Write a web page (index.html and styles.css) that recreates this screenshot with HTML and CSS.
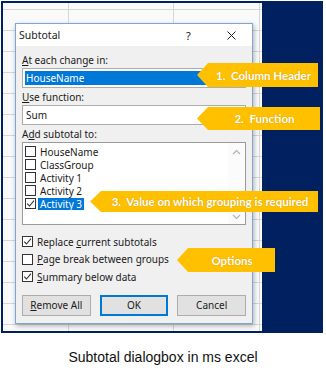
FILE: index.html
```html
<!DOCTYPE html>
<html lang="en">
<head>
    <meta charset="UTF-8">
    <meta name="viewport" content="width=device-width, initial-scale=1.0">
    <title>Subtotal dialogbox in ms excel</title>
    <link rel="stylesheet" href="styles.css">
</head>
<body>
    <div class="shot">
        <!-- Spreadsheet behind the dialog -->
        <div class="sheet">
            <div class="dialog">
                <div class="titlebar">
                    <span class="title">Subtotal</span>
                    <span class="help">?</span>
                    <svg class="close" width="9" height="9" viewBox="0 0 9 9">
                        <path d="M0.5 0.5 L8.5 8.5 M8.5 0.5 L0.5 8.5" stroke="#222" stroke-width="1" fill="none"/>
                    </svg>
                </div>
                <div class="dialog-body">
                    <div class="label"><u>A</u>t each change in:</div>
                    <div class="combo"><span class="selected">HouseName</span></div>
                    <div class="label"><u>U</u>se function:</div>
                    <div class="combo"><span class="value">Sum</span></div>
                    <div class="label">A<u>d</u>d subtotal to:</div>
                    <div class="listbox">
                        <div class="items">
                            <div class="item"><span class="check"></span><span class="name">HouseName</span></div>
                            <div class="item"><span class="check"></span><span class="name">ClassGroup</span></div>
                            <div class="item"><span class="check"></span><span class="name">Activity 1</span></div>
                            <div class="item"><span class="check"></span><span class="name">Activity 2</span></div>
                            <div class="item"><span class="check checked"></span><span class="name sel">Activity 3</span></div>
                        </div>
                        <div class="scrollbar">
                            <svg width="9" height="6" viewBox="0 0 9 6"><path d="M1 5 L4.5 1.5 L8 5" stroke="#b4b4b4" stroke-width="1.2" fill="none"/></svg>
                            <svg width="9" height="6" viewBox="0 0 9 6"><path d="M1 1 L4.5 4.5 L8 1" stroke="#b4b4b4" stroke-width="1.2" fill="none"/></svg>
                        </div>
                    </div>
                    <div class="options">
                        <div class="option"><span class="check checked"></span><span>Replace <u>c</u>urrent subtotals</span></div>
                        <div class="option"><span class="check"></span><span><u>P</u>age break between groups</span></div>
                        <div class="option"><span class="check checked"></span><span><u>S</u>ummary below data</span></div>
                    </div>
                    <div class="buttons">
                        <button><u>R</u>emove All</button>
                        <button class="default">OK</button>
                        <button>Cancel</button>
                    </div>
                </div>
            </div>
        </div>
        <div class="navy"></div>

        <!-- Yellow callouts -->
        <div class="callout c1">1.&nbsp; Column Header</div>
        <div class="callout c2">2.&nbsp; Function</div>
        <div class="callout c3">3.&nbsp; Value on which grouping is required</div>
        <div class="callout c4">Options</div>
    </div>

    <p class="caption">Subtotal dialogbox in ms excel</p>
</body>
</html>
```

FILE: styles.css
```css
body {
    margin: 0;
    background-color: #ffffff;
    font-family: "Noto Sans", "Open Sans", sans-serif;
    color: #1a1a1a;
}
.shot {
    position: relative;
    display: flex;
    width: 318px;
    height: 328px;
    margin: 1px 0 0 1px;
    border: 2px solid #002060;
}
.sheet {
    width: 259px;
    padding: 20px 0 0 12px;
    box-sizing: border-box;
    background-color: #fafafa;
    background-image:
        linear-gradient(to right, transparent 65px, #d6d6d6 65px, #d6d6d6 66px, transparent 66px),
        linear-gradient(to right, transparent 170px, #d6d6d6 170px, #d6d6d6 171px, transparent 171px),
        linear-gradient(to right, transparent 256px, #d6d6d6 256px, #d6d6d6 257px, transparent 257px),
        repeating-linear-gradient(to bottom, transparent 0, transparent 6px, #d6d6d6 6px, #d6d6d6 7px, transparent 7px, transparent 21px);
}
.navy {
    flex: 1;
    background-color: #002060;
}
.dialog {
    width: 238px;
    height: 301px;
    box-sizing: border-box;
    border: 1px solid #7ba6d6;
    background-color: #f0f0f0;
    box-shadow: 1px 2px 5px rgba(0, 0, 0, 0.3);
}
.titlebar {
    display: flex;
    align-items: center;
    height: 22px;
    padding-left: 3px;
    background-color: #ffffff;
    font-size: 10.5px;
}
.title {
    flex: 1;
}
.help {
    width: 10px;
    margin-right: 31px;
    font-size: 11px;
}
.close {
    margin-right: 16px;
}
.dialog-body {
    padding: 7px 6px 0 6px;
    font-size: 10px;
}
.label {
    height: 14px;
    line-height: 14px;
}
.combo {
    height: 20px;
    box-sizing: border-box;
    margin: 1px 0 2px 0;
    padding: 2px;
    border: 1px solid #adadad;
    background-color: #ffffff;
    display: flex;
}
.combo .selected {
    flex: 1;
    background-color: #0078d7;
    color: #ffffff;
    padding-left: 1px;
    line-height: 14px;
}
.combo .value {
    padding-left: 1px;
    line-height: 14px;
}
.listbox {
    display: flex;
    height: 83px;
    box-sizing: border-box;
    margin-top: 1px;
    border: 1px solid #9a9a9a;
    background-color: #ffffff;
}
.items {
    flex: 1;
    padding: 2px 0 0 2px;
}
.item {
    display: flex;
    align-items: center;
    height: 13px;
}
.name {
    padding: 0 2px;
    line-height: 12px;
}
.name.sel {
    background-color: #0078d7;
    color: #ffffff;
}
.check {
    width: 11px;
    height: 11px;
    box-sizing: border-box;
    margin-right: 2px;
    border: 1px solid #333333;
    background-color: #ffffff;
}
.check.checked {
    background-image: url("data:image/svg+xml;utf8,<svg xmlns='http://www.w3.org/2000/svg' width='9' height='9' viewBox='0 0 9 9'><path d='M1.2 4.6 L3.5 7 L8 1.6' stroke='%23333' stroke-width='1.1' fill='none'/></svg>");
    background-repeat: no-repeat;
}
.scrollbar {
    width: 17px;
    display: flex;
    flex-direction: column;
    justify-content: space-between;
    align-items: center;
    padding: 6px 0 4px 0;
    background-color: #fbfbfb;
}
.options {
    margin-top: 8px;
}
.option {
    display: flex;
    align-items: center;
    height: 17.5px;
}
.option .check {
    margin-right: 4px;
}
.buttons {
    display: flex;
    gap: 9px;
    margin-top: 9px;
}
button {
    width: 69px;
    height: 21px;
    padding: 0;
    border: 1px solid #adadad;
    background-color: #e1e1e1;
    font-family: "Noto Sans", "Open Sans", sans-serif;
    font-size: 10px;
    color: #1a1a1a;
}
button.default {
    border: 2px solid #0078d7;
}
.callout {
    position: absolute;
    display: flex;
    align-items: center;
    justify-content: center;
    padding-left: 12px;
    box-sizing: border-box;
    background-color: #ffc000;
    color: #ffffff;
    font-family: Lato, "Liberation Sans", sans-serif;
    font-weight: bold;
    font-size: 11.5px;
    white-space: nowrap;
    text-shadow: 0 0 1px rgba(150, 100, 0, 0.5);
    clip-path: polygon(11px 0, 100% 0, 100% 100%, 11px 100%, 0 50%);
}
.c1 {
    left: 194px;
    top: 60px;
    width: 121px;
    height: 24px;
}
.c2 {
    left: 194px;
    top: 104px;
    width: 123px;
    height: 23px;
}
.c3 {
    left: 87px;
    top: 188px;
    width: 228px;
    height: 21px;
}
.c4 {
    left: 174px;
    top: 245px;
    width: 98px;
    height: 24px;
}
.caption {
    margin: 16px 0 0 0;
    text-align: center;
    font-family: "Liberation Sans", Arial, sans-serif;
    font-size: 14px;
    color: #111111;
}
```
